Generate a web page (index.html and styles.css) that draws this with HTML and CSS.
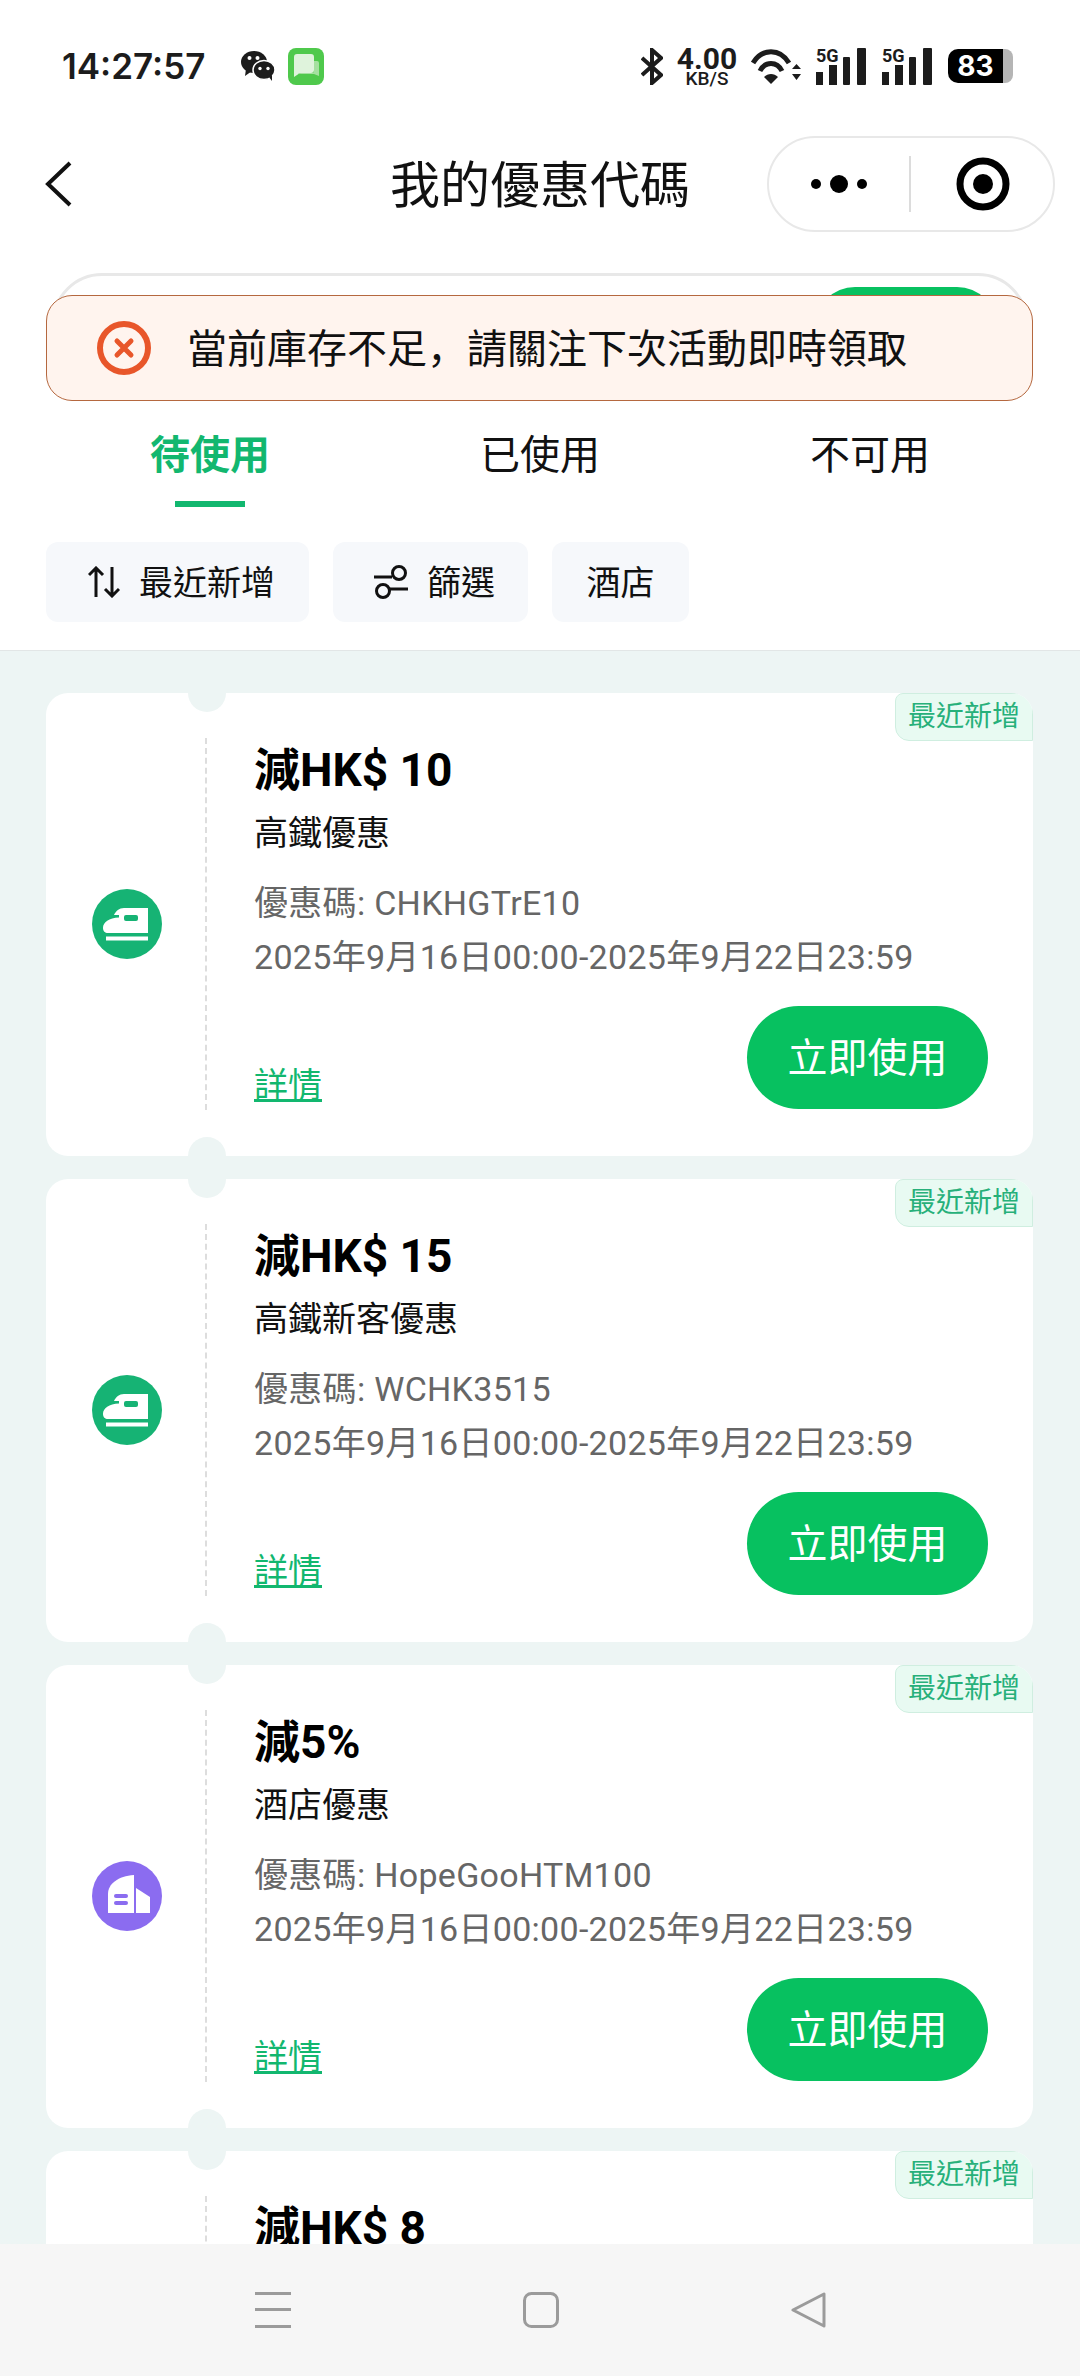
FILE: index.html
```html
<!DOCTYPE html>
<html lang="zh-Hant">
<head>
  <meta charset="UTF-8">
  <meta name="viewport" content="width=device-width, initial-scale=1.0">
  <title>我的優惠代碼</title>
  <link rel="stylesheet" href="styles.css">
</head>
<body>
  <main class="screen">
    <!-- Status bar -->
    <div class="status-bar">
      <div class="status-left">
        <span class="status-time">14:27:57</span>
        <svg class="icon-wechat" width="34" height="30" viewBox="0 0 34 30">
          <ellipse cx="13" cy="11" rx="13" ry="11" fill="#1c1c1c"/>
          <path d="M5 18 L4 25 L11 20 Z" fill="#1c1c1c"/>
          <ellipse cx="23" cy="19" rx="11" ry="9.5" fill="#1c1c1c" stroke="#fff" stroke-width="1.5"/>
          <path d="M28 26 L31 30 L31 24 Z" fill="#1c1c1c"/>
          <circle cx="8.5" cy="7" r="2" fill="#fff"/>
          <circle cx="16.5" cy="7" r="2" fill="#fff"/>
          <circle cx="19" cy="17.5" r="1.7" fill="#fff"/>
          <circle cx="27" cy="17.5" r="1.7" fill="#fff"/>
        </svg>
        <svg class="icon-messages" width="36" height="37" viewBox="0 0 36 37">
          <rect width="36" height="37" rx="8" fill="#4fc94c"/>
          <path d="M9 6 H23 Q26 6 26 9 V22 Q26 25 23 25 H12 L6 29 V9 Q6 6 9 6 Z" fill="#dff3dc"/>
          <path d="M26 13 H29 Q31 13 31 15 V28 L26 26 H13 Q10 26 10 25 H24 Q26 25 26 23 Z" fill="#a5e0a0"/>
        </svg>
      </div>
      <div class="status-right">
        <svg width="22" height="37" viewBox="0 0 22 37" fill="none" stroke="#1c1c1c" stroke-width="4">
          <path d="M1 10 L20 27 L11 35 V2 L20 10 L1 27"/>
        </svg>
        <div class="net-speed">
          <span class="net-value">4.00</span>
          <span class="net-unit">KB/S</span>
        </div>
        <svg width="50" height="36" viewBox="0 0 50 36" fill="none" stroke="#1c1c1c" stroke-width="5">
          <path d="M2 15 C11 0 29 0 38 15"/>
          <path d="M9 23 C14 13 26 13 31 23"/>
          <path d="M13 29 L20 36 L27 29 C23 25 17 25 13 29 Z" fill="#1c1c1c" stroke="none"/>
          <path d="M41 21 L45.5 16 L50 21 Z M41 26 L45.5 32 L50 26 Z" fill="#1c1c1c" stroke="none"/>
        </svg>
        <div class="signal">
          <span class="signal-label">5G</span>
          <svg width="51" height="37" viewBox="0 0 51 37" fill="#1c1c1c">
            <rect x="0" y="24" width="7" height="13"/>
            <rect x="13" y="17" width="8" height="20"/>
            <rect x="27" y="9" width="7" height="28" rx="1"/>
            <rect x="41" y="0" width="9" height="37" rx="1"/>
          </svg>
        </div>
        <div class="signal">
          <span class="signal-label">5G</span>
          <svg width="51" height="37" viewBox="0 0 51 37" fill="#1c1c1c">
            <rect x="0" y="24" width="7" height="13"/>
            <rect x="13" y="17" width="8" height="20"/>
            <rect x="27" y="9" width="7" height="28" rx="1"/>
            <rect x="41" y="0" width="9" height="37" rx="1"/>
          </svg>
        </div>
        <div class="battery">
          <span class="battery-level">83</span>
          <span class="battery-empty"></span>
        </div>
      </div>
    </div>

    <!-- Navigation -->
    <header class="nav-bar">
      <svg class="nav-back" width="27" height="46" viewBox="0 0 27 46" fill="none" stroke="#111" stroke-width="4">
        <path d="M25 2 L3 23 L25 44"/>
      </svg>
      <h1 class="nav-title">我的優惠代碼</h1>
      <div class="capsule">
        <div class="capsule-half">
          <svg width="62" height="20" viewBox="0 0 62 20" fill="#000">
            <circle cx="8" cy="10" r="5"/>
            <circle cx="31" cy="10" r="9"/>
            <circle cx="54" cy="10" r="5"/>
          </svg>
        </div>
        <div class="capsule-half capsule-right">
          <svg width="54" height="54" viewBox="0 0 54 54">
            <circle cx="27" cy="27" r="23" fill="none" stroke="#000" stroke-width="7"/>
            <circle cx="27" cy="27" r="10" fill="#000"/>
          </svg>
        </div>
      </div>
    </header>

    <!-- Redeem box, covered by the toast -->
    <div class="redeem-box">
      <span class="redeem-button"></span>
    </div>
    <div class="toast">
      <svg width="54" height="54" viewBox="0 0 54 54" fill="none" stroke="#e8562a">
        <circle cx="27" cy="27" r="24" stroke-width="6"/>
        <path d="M20 20 L34 34 M34 20 L20 34" stroke-width="5" stroke-linecap="round"/>
      </svg>
      <span class="toast-text">當前庫存不足<span class="toast-comma" lang="zh-Hans">，</span>請關注下次活動即時領取</span>
    </div>

    <!-- Tabs -->
    <nav class="tabs">
      <div class="tab tab-active">
        <span>待使用</span>
        <i class="tab-line"></i>
      </div>
      <div class="tab"><span>已使用</span></div>
      <div class="tab"><span>不可用</span></div>
    </nav>

    <!-- Filters -->
    <div class="filters">
      <div class="chip chip-sort">
        <svg width="32" height="32" viewBox="0 0 32 32" fill="none" stroke="#111" stroke-width="3">
          <path d="M8 31 V2 M1 9 L8 2 L15 9"/>
          <path d="M24 1 V30 M17 23 L24 30 L31 23"/>
        </svg>
        <span>最近新增</span>
      </div>
      <div class="chip chip-filter">
        <svg width="34" height="34" viewBox="0 0 34 34" fill="none" stroke="#111" stroke-width="3">
          <path d="M0 12 H18"/>
          <circle cx="25" cy="8" r="6.5"/>
          <circle cx="9" cy="26" r="6.5"/>
          <path d="M16 24 H34"/>
        </svg>
        <span>篩選</span>
      </div>
      <div class="chip chip-plain"><span>酒店</span></div>
    </div>

    <!-- Coupon list -->
    <section class="coupon-list">
      <article class="coupon">
        <span class="coupon-badge">最近新增</span>
        <div class="coupon-stub">
          <svg width="70" height="70" viewBox="0 0 70 70">
            <circle cx="35" cy="35" r="35" fill="#16b374"/>
            <path d="M56 19 H32 C27 19 24 22 22 26 H27 V28.5 C17 29 11 33 11 39 C11 42 13 44 16 44 H56 Z" fill="#fff"/>
            <rect x="32" y="26" width="14" height="6" rx="2" fill="#16b374"/>
            <rect x="14" y="47.5" width="42" height="4" fill="#fff"/>
          </svg>
        </div>
        <div class="coupon-body">
          <h2 class="coupon-title">減HK$ 10</h2>
          <p class="coupon-name">高鐵優惠</p>
          <p class="coupon-code">優惠碼: CHKHGTrE10</p>
          <p class="coupon-date">2025年9月16日00:00-2025年9月22日23:59</p>
          <div class="coupon-footer">
            <a class="coupon-link">詳情</a>
            <button class="coupon-use">立即使用</button>
          </div>
        </div>
      </article>

      <article class="coupon">
        <span class="coupon-badge">最近新增</span>
        <div class="coupon-stub">
          <svg width="70" height="70" viewBox="0 0 70 70">
            <circle cx="35" cy="35" r="35" fill="#16b374"/>
            <path d="M56 19 H32 C27 19 24 22 22 26 H27 V28.5 C17 29 11 33 11 39 C11 42 13 44 16 44 H56 Z" fill="#fff"/>
            <rect x="32" y="26" width="14" height="6" rx="2" fill="#16b374"/>
            <rect x="14" y="47.5" width="42" height="4" fill="#fff"/>
          </svg>
        </div>
        <div class="coupon-body">
          <h2 class="coupon-title">減HK$ 15</h2>
          <p class="coupon-name">高鐵新客優惠</p>
          <p class="coupon-code">優惠碼: WCHK3515</p>
          <p class="coupon-date">2025年9月16日00:00-2025年9月22日23:59</p>
          <div class="coupon-footer">
            <a class="coupon-link">詳情</a>
            <button class="coupon-use">立即使用</button>
          </div>
        </div>
      </article>

      <article class="coupon">
        <span class="coupon-badge">最近新增</span>
        <div class="coupon-stub">
          <svg width="70" height="70" viewBox="0 0 70 70">
            <circle cx="35" cy="35" r="35" fill="#8b6cf0"/>
            <path d="M16 52 V33 C16 23 26 15 42 14 V52 Z" fill="#fff"/>
            <path d="M44 27 L58 36 V52 H44 Z" fill="#fff"/>
            <rect x="22" y="33" width="14" height="4" rx="2" fill="#8b6cf0"/>
            <rect x="22" y="40" width="14" height="4" rx="2" fill="#8b6cf0"/>
          </svg>
        </div>
        <div class="coupon-body">
          <h2 class="coupon-title">減5%</h2>
          <p class="coupon-name">酒店優惠</p>
          <p class="coupon-code">優惠碼: HopeGooHTM100</p>
          <p class="coupon-date">2025年9月16日00:00-2025年9月22日23:59</p>
          <div class="coupon-footer">
            <a class="coupon-link">詳情</a>
            <button class="coupon-use">立即使用</button>
          </div>
        </div>
      </article>

      <article class="coupon">
        <span class="coupon-badge">最近新增</span>
        <div class="coupon-stub"></div>
        <div class="coupon-body">
          <h2 class="coupon-title">減HK$ 8</h2>
        </div>
      </article>
    </section>

    <!-- System navigation -->
    <footer class="system-nav">
      <svg width="36" height="36" viewBox="0 0 36 36" fill="#9b9b9b">
        <rect y="0" width="36" height="3"/>
        <rect y="16" width="36" height="3"/>
        <rect y="33" width="36" height="3"/>
      </svg>
      <svg width="36" height="36" viewBox="0 0 36 36" fill="none" stroke="#9b9b9b" stroke-width="3">
        <rect x="1.5" y="1.5" width="33" height="33" rx="7"/>
      </svg>
      <svg width="36" height="36" viewBox="0 0 36 36" fill="none" stroke="#9b9b9b" stroke-width="3" stroke-linejoin="round">
        <path d="M33 2 V34 L2 18 Z"/>
      </svg>
    </footer>
  </main>
</body>
</html>
```

FILE: styles.css
```css
:root {
  --color-green: #07c160;
  --color-green-text: #12b76f;
  --color-page: #edf5f4;
  --color-grey-text: #666666;
  --font-main: "Roboto", "Noto Sans CJK TC", sans-serif;
}
* {
  margin: 0;
  padding: 0;
  box-sizing: border-box;
}
body {
  width: 1080px;
  height: 2376px;
  overflow: hidden;
  background-color: #fff;
  font-family: var(--font-main);
  color: #111;
}
.screen {
  position: relative;
  display: flex;
  flex-direction: column;
  height: 100%;
}

/* status bar */
.status-bar {
  flex: none;
  height: 132px;
  display: flex;
  justify-content: space-between;
  align-items: center;
  padding: 0 67px 0 62px;
}
.status-left {
  display: flex;
  align-items: center;
}
.status-time {
  width: 179px;
  font-family: "Inter", sans-serif;
  font-size: 35px;
  font-weight: 600;
  color: #1c1c1c;
}
.icon-messages {
  margin-left: 13px;
}
.status-right {
  display: flex;
  align-items: center;
  gap: 15px;
}
.net-speed {
  display: flex;
  flex-direction: column;
  align-items: center;
  width: 58px;
  color: #1c1c1c;
  font-family: "Roboto", sans-serif;
  font-weight: 700;
}
.net-value {
  font-size: 30px;
  line-height: 24px;
}
.net-unit {
  font-size: 19px;
  font-weight: 500;
  line-height: 15px;
}
.signal {
  position: relative;
  width: 51px;
  height: 37px;
}
.signal-label {
  position: absolute;
  top: -1px;
  left: 0;
  font-family: "Roboto", sans-serif;
  font-size: 18px;
  font-weight: 700;
  line-height: 17px;
  color: #1c1c1c;
}
.battery {
  display: flex;
  height: 34px;
  width: 65px;
}
.battery-level {
  width: 55px;
  background-color: #000;
  border-radius: 10px 0 0 10px;
  color: #fff;
  font-family: "Inter", sans-serif;
  font-size: 28px;
  font-weight: 700;
  line-height: 34px;
  text-align: center;
}
.battery-empty {
  width: 10px;
  background-color: #b5b5b5;
  border-radius: 0 8px 8px 0;
}

/* nav bar */
.nav-bar {
  flex: none;
  height: 104px;
  display: grid;
  grid-template-columns: 1fr auto 1fr;
  align-items: center;
  padding: 0 25px;
}
.nav-back {
  margin-left: 20px;
}
.nav-title {
  margin-top: 4px;
  font-size: 50px;
  font-weight: 400;
  line-height: 60px;
  color: #111;
}
.capsule {
  justify-self: end;
  display: flex;
  align-items: center;
  width: 288px;
  height: 96px;
  border: 2px solid #e8e8e8;
  border-radius: 48px;
}
.capsule-half {
  flex: 1;
  height: 56px;
  display: flex;
  justify-content: center;
  align-items: center;
}
.capsule-right {
  padding-left: 3px;
  border-left: 2px solid #dcdcdc;
}

/* redeem box + toast */
.redeem-box {
  flex: none;
  height: 100px;
  margin: 37px 52px 0;
  padding: 11px 28px 0 0;
  border: 3px solid #e8e8e8;
  border-radius: 50px;
  display: flex;
  justify-content: flex-end;
}
.redeem-button {
  width: 182px;
  height: 80px;
  background-color: var(--color-green);
  border-radius: 40px;
}
.toast {
  position: absolute;
  top: 295px;
  left: 46px;
  width: 987px;
  height: 106px;
  display: flex;
  align-items: center;
  gap: 36px;
  padding-left: 50px;
  background-color: #fff4ee;
  border: 1px solid #b5683f;
  border-radius: 26px;
}
.toast-text {
  font-size: 40px;
  line-height: 50px;
  color: #111;
}
.toast-comma {
  font-family: "Noto Sans CJK SC", sans-serif;
}

/* tabs */
.tabs {
  flex: none;
  display: grid;
  grid-template-columns: repeat(3, 330px);
  height: 91px;
  margin: 43px 45px 0;
}
.tab {
  display: flex;
  flex-direction: column;
  align-items: center;
  font-size: 40px;
  line-height: 80px;
}
.tab-active {
  color: var(--color-green-text);
  font-weight: 700;
}
.tab-line {
  width: 70px;
  height: 6px;
  margin-top: 5px;
  background-color: var(--color-green-text);
}

/* filter chips */
.filters {
  flex: none;
  display: flex;
  gap: 24px;
  height: 109px;
  margin-top: 35px;
  padding-left: 46px;
  border-bottom: 1px solid #e2e6e6;
}
.chip {
  height: 80px;
  display: flex;
  align-items: center;
  gap: 19px;
  background-color: #f6f8fb;
  border-radius: 12px;
  font-size: 34px;
  color: #111;
}
.chip span {
  margin-bottom: 4px;
}
.chip-sort {
  width: 263px;
  padding-left: 42px;
}
.chip-filter {
  width: 195px;
  padding-left: 41px;
}
.chip-plain {
  width: 137px;
  justify-content: center;
}

/* coupons */
.coupon-list {
  flex: 1;
  min-height: 0;
  overflow: hidden;
  display: flex;
  flex-direction: column;
  gap: 23px;
  padding: 42px 47px 0 46px;
  background-color: var(--color-page);
}
.coupon {
  flex: none;
  position: relative;
  display: flex;
  height: 463px;
  background-color: #fff;
  border-radius: 22px;
  overflow: hidden;
}
.coupon::before,
.coupon::after {
  content: "";
  position: absolute;
  left: 142px;
  width: 38px;
  height: 38px;
  border-radius: 50%;
  background-color: var(--color-page);
}
.coupon::before {
  top: -19px;
}
.coupon::after {
  bottom: -19px;
}
.coupon-badge {
  position: absolute;
  top: 0;
  right: 0;
  width: 138px;
  height: 48px;
  background-color: #e8faf2;
  border: 1px solid #cfeee0;
  border-radius: 8px 8px 0 14px;
  color: #27b07a;
  font-size: 28px;
  line-height: 45px;
  text-align: center;
}
.coupon-stub {
  flex: none;
  width: 161px;
  margin: 45px 0 46px;
  border-right: 2px dashed #dddddd;
  display: flex;
  justify-content: center;
  align-items: center;
  padding-left: 2px;
}
.coupon-body {
  flex: 1;
  padding: 51px 45px 0 47px;
}
.coupon-title {
  font-size: 46px;
  font-weight: 700;
  line-height: 52px;
  color: #000;
}
.coupon-name {
  margin-top: 13px;
  font-size: 34px;
  line-height: 48px;
  color: #111;
}
.coupon-code {
  margin-top: 19px;
  font-size: 34px;
  line-height: 54px;
  letter-spacing: 0.3px;
  color: var(--color-grey-text);
}
.coupon-date {
  font-size: 34px;
  line-height: 54px;
  letter-spacing: 0.3px;
  color: var(--color-grey-text);
  white-space: nowrap;
}
.coupon-footer {
  margin-top: 22px;
  display: flex;
  justify-content: space-between;
  align-items: flex-end;
}
.coupon-link {
  font-size: 34px;
  line-height: 48px;
  color: var(--color-green-text);
  text-decoration: underline;
}
.coupon-use {
  width: 241px;
  height: 103px;
  padding-bottom: 5px;
  border: none;
  border-radius: 52px;
  background-color: var(--color-green);
  color: #fff;
  font-family: var(--font-main);
  font-size: 40px;
}

/* system nav */
.system-nav {
  flex: none;
  height: 132px;
  display: flex;
  align-items: flex-start;
  gap: 232px;
  padding: 48px 0 0 255px;
  background-color: #f6f6f6;
}
```
